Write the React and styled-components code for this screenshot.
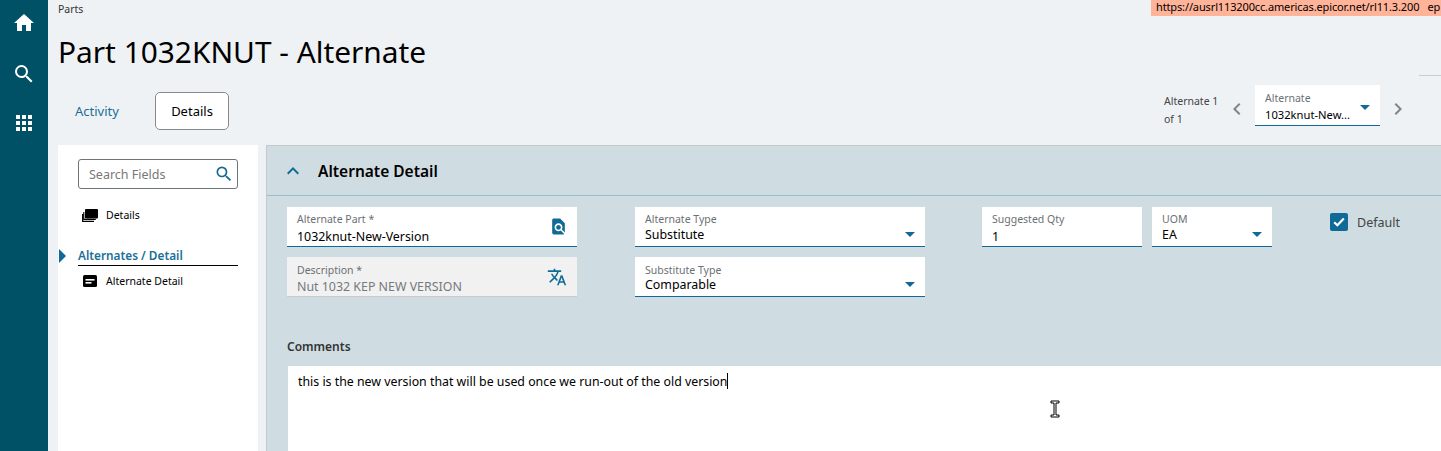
import React from "react";
import styled, { createGlobalStyle } from "styled-components";
import {
  MdHome,
  MdSearch,
  MdTranslate,
  MdFindInPage,
  MdExpandLess,
  MdChevronLeft,
  MdChevronRight,
} from "react-icons/md";

const blue = "#0f6a97";
const font = `"Noto Sans", "Open Sans", sans-serif`;

const GlobalStyle = createGlobalStyle`
  html, body { margin: 0; padding: 0; height: 451px; overflow: hidden; }
  body { font-family: ${font}; background: #eff2f5; color: #000; }
  * { box-sizing: border-box; }
`;

const Page = styled.div`
  position: relative;
  display: flex;
  width: 1441px;
  height: 451px;
  overflow: hidden;
`;

const Rail = styled.nav`
  width: 48px;
  flex: none;
  background: #005165;
  display: flex;
  flex-direction: column;
  align-items: center;
  padding: 11px 1px 0 0;
  gap: 27px;
  color: #fff;
`;

const AppsGrid = styled.div`
  display: grid;
  grid-template-columns: repeat(3, 4px);
  grid-auto-rows: 4px;
  gap: 2px;
  margin-top: 2px;
  span { background: #fff; }
`;

const Main = styled.main`
  flex: 1;
  min-width: 0;
  display: flex;
  flex-direction: column;
`;

const Crumb = styled.div`
  font-size: 10.5px;
  line-height: 16px;
  padding: 1px 0 0 10px;
  height: 16px;
  color: #333;
`;

const Banner = styled.div`
  position: absolute;
  top: 0;
  left: 1151px;
  right: 0;
  height: 16px;
  background: #ffb399;
  font-size: 11px;
  letter-spacing: -0.13px;
  line-height: 14px;
  padding-left: 5px;
  white-space: pre;
`;

const Title = styled.h1`
  margin: 15px 0 0 10px;
  font-size: 29.85px;
  line-height: 42px;
  font-weight: 400;
`;

const Rule = styled.div`
  position: absolute;
  top: 75px;
  left: 1419px;
  right: 0;
  height: 1px;
  background: #c8cdd1;
`;

const TabRow = styled.div`
  display: flex;
  align-items: flex-start;
  height: 72px;
  padding-top: 19px;
`;

const TabLink = styled.div`
  margin-left: 27px;
  width: 80px;
  font-size: 13px;
  line-height: 38px;
  color: #1a6f96;
`;

const TabButton = styled.div`
  width: 74px;
  height: 38px;
  border: 1px solid #858a8e;
  border-radius: 5px;
  background: #fff;
  font-size: 13px;
  line-height: 36px;
  text-align: center;
`;

const Pager = styled.div`
  margin-left: auto;
  display: flex;
  align-items: flex-start;
  margin-top: -7px;
  padding-right: 25px;
`;

const PagerText = styled.div`
  width: 56px;
  margin-top: 7px;
  padding-left: 1px;
  font-size: 10.5px;
  line-height: 18px;
  color: #444;
`;

const PagerArrow = styled.div`
  width: 36px;
  height: 40px;
  display: flex;
  align-items: center;
  justify-content: center;
  margin-top: 4px;
  color: #7d858a;
  font-size: 24px;
`;

const Pick = styled.div`
  position: relative;
  width: 125px;
  height: 41px;
  background: #fff;
  border-bottom: 1px solid ${blue};
  padding: 7px 0 0 10px;
`;

const Body = styled.div`
  flex: 1;
  display: flex;
  min-height: 0;
  padding-left: 10px;
`;

const Side = styled.aside`
  position: relative;
  width: 200px;
  flex: none;
  background: #fff;
  padding: 14px 20px 0;
`;

const SearchBox = styled.div`
  height: 30px;
  border: 1px solid #6f7478;
  border-radius: 3px;
  display: flex;
  align-items: center;
  justify-content: space-between;
  padding: 0 3px 0 10px;
  font-size: 12.5px;
  color: #777;
  svg { color: ${blue}; font-size: 20px; }
`;

const SideItem = styled.div`
  display: flex;
  align-items: center;
  gap: 8px;
  padding-left: 4px;
  font-size: 10.5px;
  line-height: 16px;
  margin-top: ${(p) => p.$top}px;
`;

const SideHead = styled.div`
  position: relative;
  margin-top: 23px;
  height: 20px;
  border-bottom: 1px solid #000;
  font-size: 11.8px;
  line-height: 19px;
  font-weight: 600;
  color: #1a6f96;
  &::before {
    content: "";
    position: absolute;
    left: -19px;
    top: 3px;
    border-left: 7px solid ${blue};
    border-top: 7px solid transparent;
    border-bottom: 7px solid transparent;
  }
`;

const Panel = styled.section`
  flex: 1;
  margin-left: 8px;
  min-width: 0;
  background: #cfdce1;
  border-top: 1px solid #c2cace;
  border-left: 1px solid #c2cace;
  display: flex;
  flex-direction: column;
`;

const PanelHead = styled.div`
  height: 50px;
  flex: none;
  display: flex;
  align-items: center;
  padding-left: 14px;
  border-bottom: 1px solid #9dbdc9;
  font-size: 15.5px;
  font-weight: 600;
  gap: 13px;
  svg { color: ${blue}; font-size: 24px; }
`;

const Fields = styled.div`
  display: flex;
  align-items: flex-start;
  padding: 11px 0 0 20px;
`;

const Column = styled.div`
  display: flex;
  flex-direction: column;
  gap: 10px;
  width: ${(p) => p.$width}px;
  margin-right: ${(p) => p.$gap}px;
`;

const Field = styled.div`
  position: relative;
  width: ${(p) => p.$width || 290}px;
  flex: none;
  height: 40px;
  margin-left: ${(p) => p.$left || 0}px;
  padding: ${(p) => p.$pad || 6}px 0 0 10px;
  background: ${(p) => (p.$disabled ? "#f1f1f1" : "#fff")};
  border-bottom: 1px solid ${(p) => (p.$disabled ? "#c8cccf" : blue)};
`;

const Label = styled.div`
  font-size: 10.5px;
  line-height: 13px;
  color: #6b7075;
  white-space: nowrap;
`;

const Value = styled.div`
  font-size: 12.4px;
  line-height: 15px;
  margin-top: ${(p) => p.$top || 0}px;
  color: ${(p) => (p.$disabled ? "#757a7e" : "#000")};
  white-space: nowrap;
`;

const PickValue = styled(Value)`
  font-size: 11.2px;
`;

const Caret = styled.span`
  position: absolute;
  right: 10px;
  top: ${(p) => p.$top || 25}px;
  border-top: 5px solid ${blue};
  border-left: 5px solid transparent;
  border-right: 5px solid transparent;
`;

const FieldIcon = styled.span`
  position: absolute;
  right: ${(p) => p.$right}px;
  top: ${(p) => p.$top}px;
  display: flex;
  color: ${blue};
  font-size: ${(p) => p.$size}px;
`;

const Check = styled.label`
  display: flex;
  align-items: center;
  gap: 9px;
  margin: 6px 0 0 58px;
  font-size: 12.5px;
  color: #444;
`;

const CheckBox = styled.span`
  width: 18px;
  height: 18px;
  border-radius: 2px;
  background: ${blue};
  display: flex;
  align-items: center;
  justify-content: center;
`;

const CommentLabel = styled.div`
  margin: 41px 0 0 20px;
  font-size: 12px;
  line-height: 17px;
  font-weight: 600;
  color: #333;
`;

const CommentBox = styled.div`
  flex: 1;
  margin: 11px 0 0 21px;
  background: #fff;
  padding: 7px 10px;
  font-size: 12.35px;
  line-height: 18px;
`;

const TextCaret = styled.span`
  display: inline-block;
  width: 1px;
  height: 16px;
  background: #000;
  vertical-align: -3px;
`;

const MouseCursor = styled.svg`
  position: absolute;
  left: 1050px;
  top: 400px;
`;

const DetailsIcon = () => (
  <svg width="16" height="13" viewBox="0 0 16 13">
    <rect x="3" y="0" width="13" height="9.5" rx="1" fill="#000" />
    <path d="M1.8 3v7.4h12M0.6 5v7.4H12" fill="none" stroke="#000" strokeWidth="1.1" />
  </svg>
);

const CardIcon = () => (
  <svg width="16" height="12" viewBox="0 0 16 12">
    <rect x="1" width="14" height="12" rx="1.5" fill="#000" />
    <rect x="3.5" y="4" width="9" height="1.6" fill="#fff" />
    <rect x="3.5" y="7" width="6" height="1.6" fill="#fff" />
  </svg>
);

const CheckMark = () => (
  <svg width="12" height="10" viewBox="0 0 12 10">
    <path d="M1.2 5.2 4.4 8.3 10.8 1.6" fill="none" stroke="#fff" strokeWidth="2.2" />
  </svg>
);

export default function App() {
  return (
    <>
      <GlobalStyle />
      <Page>
        <Rail>
          <MdHome size={24} />
          <MdSearch size={24} />
          <AppsGrid>
            {Array.from({ length: 9 }, (_, i) => (
              <span key={i} />
            ))}
          </AppsGrid>
        </Rail>
        <Main>
          <Crumb>Parts</Crumb>
          <Title>Part 1032KNUT - Alternate</Title>
          <TabRow>
            <TabLink>Activity</TabLink>
            <TabButton>Details</TabButton>
            <Pager>
              <PagerText>
                Alternate 1
                <br />
                of 1
              </PagerText>
              <PagerArrow>
                <MdChevronLeft />
              </PagerArrow>
              <Pick>
                <Label>Alternate</Label>
                <PickValue $top={2}>1032knut-New...</PickValue>
                <Caret $top={20} />
              </Pick>
              <PagerArrow>
                <MdChevronRight />
              </PagerArrow>
            </Pager>
          </TabRow>
          <Body>
            <Side>
              <SearchBox>
                Search Fields
                <MdSearch />
              </SearchBox>
              <SideItem $top={18}>
                <DetailsIcon />
                Details
              </SideItem>
              <SideHead>Alternates / Detail</SideHead>
              <SideItem $top={7}>
                <CardIcon />
                Alternate Detail
              </SideItem>
            </Side>
            <Panel>
              <PanelHead>
                <MdExpandLess />
                Alternate Detail
              </PanelHead>
              <Fields>
                <Column $width={290} $gap={58}>
                  <Field>
                    <Label>Alternate Part *</Label>
                    <Value $top={3}>1032knut-New-Version</Value>
                    <FieldIcon $right={9} $top={10} $size={19}>
                      <MdFindInPage />
                    </FieldIcon>
                  </Field>
                  <Field $disabled $pad={7}>
                    <Label>Description *</Label>
                    <Value $disabled $top={2}>Nut 1032 KEP NEW VERSION</Value>
                    <FieldIcon $right={10} $top={10} $size={20}>
                      <MdTranslate />
                    </FieldIcon>
                  </Field>
                </Column>
                <Column $width={290} $gap={57}>
                  <Field>
                    <Label>Alternate Type</Label>
                    <Value $top={1}>Substitute</Value>
                    <Caret />
                  </Field>
                  <Field $pad={7}>
                    <Label>Substitute Type</Label>
                    <Value>Comparable</Value>
                    <Caret />
                  </Field>
                </Column>
                <Field $width={160}>
                  <Label>Suggested Qty</Label>
                  <Value $top={3}>1</Value>
                </Field>
                <Field $width={120} $left={10}>
                  <Label>UOM</Label>
                  <Value $top={1}>EA</Value>
                  <Caret />
                </Field>
                <Check>
                  <CheckBox>
                    <CheckMark />
                  </CheckBox>
                  Default
                </Check>
              </Fields>
              <CommentLabel>Comments</CommentLabel>
              <CommentBox>
                this is the new version that will be used once we run-out of the old version
                <TextCaret />
              </CommentBox>
            </Panel>
          </Body>
        </Main>
        <Banner>{"https://ausrl113200cc.americas.epicor.net/rl11.3.200   ep"}</Banner>
        <Rule />
        <MouseCursor width="10" height="18" viewBox="0 0 10 18">
          <path
            d="M1 1h8v2H6v12h3v2H1v-2h3V3H1z"
            fill="#fff"
            stroke="#000"
            strokeWidth="1"
          />
        </MouseCursor>
      </Page>
    </>
  );
}
